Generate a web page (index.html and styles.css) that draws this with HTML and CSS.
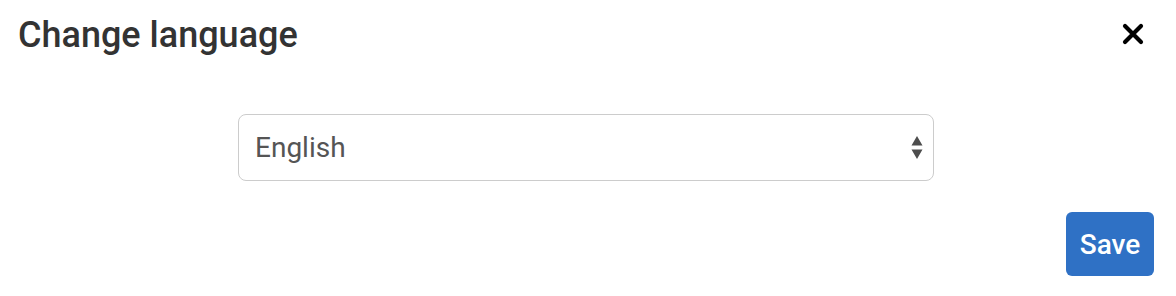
FILE: index.html
```html
<!DOCTYPE html>
<html lang="en">
<head>
<meta charset="utf-8">
<title>Change language</title>
<link rel="stylesheet" href="styles.css">
</head>
<body>
<div class="modal">
  <div class="modal-header">
    <h4 class="modal-title">Change language</h4>
    <button class="close" aria-label="Close">
      <svg width="22" height="22" viewBox="0 0 22 22"><path d="M3 3 L19 19 M19 3 L3 19" stroke="#000" stroke-width="4.2" stroke-linecap="round"/></svg>
    </button>
  </div>
  <div class="modal-body">
    <div class="select">
      <span class="select-value">English</span>
      <svg class="select-arrows" width="12" height="24" viewBox="0 0 12 24"><path d="M6 0 L11.5 9.5 L0.5 9.5 Z M0.5 13.5 L11.5 13.5 L6 23 Z" fill="#4d4d4d"/></svg>
    </div>
  </div>
  <div class="modal-footer">
    <button class="btn-primary">Save</button>
  </div>
</div>
</body>
</html>
```

FILE: styles.css
```css
html, body {
  margin: 0;
  padding: 0;
  background: #fff;
}
body {
  font-family: Roboto, "Liberation Sans", sans-serif;
  width: 1176px;
  height: 296px;
  overflow: hidden;
}
.modal-header {
  display: flex;
  justify-content: space-between;
  align-items: flex-start;
  padding: 15px 32px 0 18px;
}
.modal-title {
  margin: 0;
  font-size: 36px;
  line-height: 40px;
  font-weight: 500;
  color: #333;
}
.close {
  margin-top: 8px;
  padding: 0;
  border: 0;
  background: none;
  width: 22px;
  height: 22px;
  display: block;
}
.close svg { display: block; }
.modal-body {
  display: flex;
  justify-content: center;
  padding-top: 59px;
  padding-right: 4px;
}
.select {
  position: relative;
  box-sizing: border-box;
  width: 696px;
  height: 67px;
  border: 1.5px solid #cccccc;
  border-radius: 8px;
  display: flex;
  align-items: center;
  padding: 0 16px;
  background: #fff;
}
.select-value {
  font-size: 28px;
  color: #555;
  line-height: 1;
}
.select-arrows {
  position: absolute;
  right: 10px;
  top: 21px;
}
.modal-footer {
  display: flex;
  justify-content: flex-end;
  padding: 31px 22px 0;
}
.btn-primary {
  width: 88px;
  height: 64px;
  border: 0;
  border-radius: 6px;
  background: #2f71c5;
  color: #fff;
  font-family: Roboto, "Liberation Sans", sans-serif;
  font-size: 28px;
  font-weight: 500;
  padding: 0;
}
```
